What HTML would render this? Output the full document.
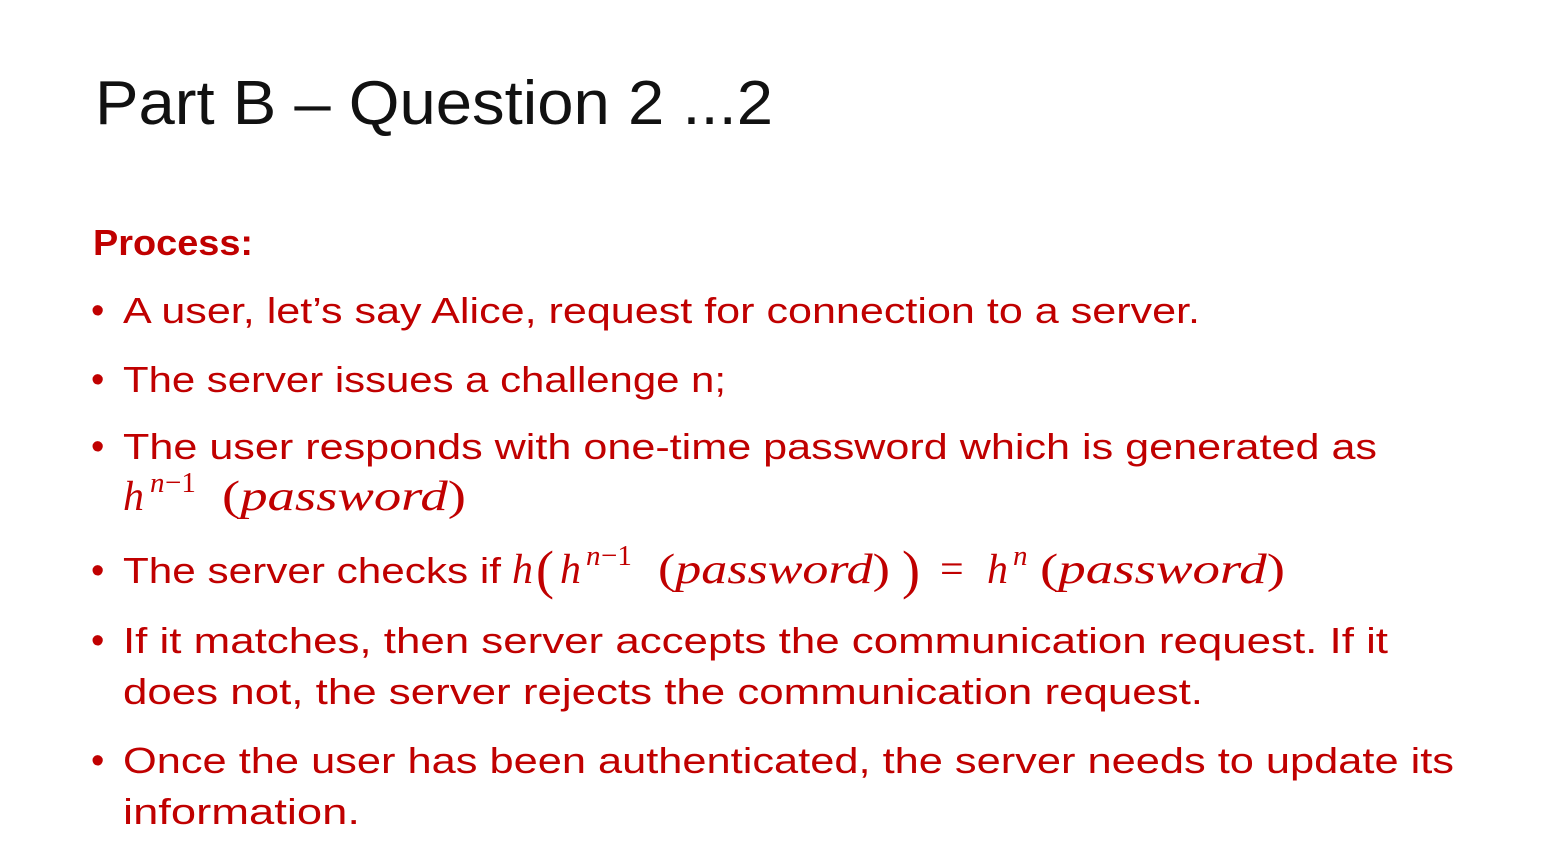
<!DOCTYPE html>
<html><head><meta charset="utf-8"><style>
html,body{margin:0;padding:0;background:#fff;}
svg{display:block;}
.t{font-family:"Liberation Sans",sans-serif;fill:#c00000;font-size:36px;}
.m{font-family:"Liberation Serif",serif;font-style:italic;fill:#c00000;}
.mr{font-family:"Liberation Serif",serif;fill:#c00000;}
.b{font-family:"Liberation Sans",sans-serif;fill:#c00000;font-size:38px;}
</style></head><body>
<svg width="1554" height="855" viewBox="0 0 1554 855" xmlns="http://www.w3.org/2000/svg">
<rect width="1554" height="855" fill="#fff"/>
<text x="95" y="124" font-family="Liberation Sans, sans-serif" font-size="62" fill="#111" textLength="678" lengthAdjust="spacingAndGlyphs">Part B – Question 2 ...2</text>
<text x="93" y="255" class="t" font-weight="bold" textLength="160" lengthAdjust="spacingAndGlyphs">Process:</text>

<text x="91" y="323" class="b">•</text>
<text x="123" y="323" class="t" textLength="1077" lengthAdjust="spacingAndGlyphs">A user, let’s say Alice, request for connection to a server.</text>

<text x="91" y="392" class="b">•</text>
<text x="123" y="392" class="t" textLength="603" lengthAdjust="spacingAndGlyphs">The server issues a challenge n;</text>

<text x="91" y="459" class="b">•</text>
<text x="123" y="459" class="t" textLength="1254" lengthAdjust="spacingAndGlyphs">The user responds with one-time password which is generated as</text>
<text x="123" y="510" class="m" style="font-size:42px">h</text>
<text x="150" y="492" class="m" style="font-size:29px">n</text><text x="165" y="492" class="mr" style="font-size:29px">−1</text>
<text x="222" y="510" class="mr" style="font-size:42px" textLength="244" lengthAdjust="spacingAndGlyphs">(<tspan font-style="italic">password</tspan>)</text>

<text x="91" y="583" class="b">•</text>
<text x="123" y="583" class="t" textLength="378" lengthAdjust="spacingAndGlyphs">The server checks if</text>
<text x="512" y="583" class="m" style="font-size:42px">h</text>
<text x="536" y="588" class="mr" style="font-size:54px">(</text>
<text x="560" y="583" class="m" style="font-size:42px">h</text>
<text x="586" y="565" class="m" style="font-size:29px">n</text><text x="601" y="565" class="mr" style="font-size:29px">−1</text>
<text x="658" y="583" class="mr" style="font-size:42px" textLength="232" lengthAdjust="spacingAndGlyphs">(<tspan font-style="italic">password</tspan>)</text>
<text x="902" y="588" class="mr" style="font-size:54px">)</text>
<text x="940" y="583" class="mr" style="font-size:42px">=</text>
<text x="987" y="583" class="m" style="font-size:42px">h</text>
<text x="1013" y="565" class="m" style="font-size:29px">n</text>
<text x="1040" y="583" class="mr" style="font-size:42px" textLength="245" lengthAdjust="spacingAndGlyphs">(<tspan font-style="italic">password</tspan>)</text>

<text x="91" y="653" class="b">•</text>
<text x="123" y="653" class="t" textLength="1265" lengthAdjust="spacingAndGlyphs">If it matches, then server accepts the communication request. If it</text>
<text x="123" y="704" class="t" textLength="1080" lengthAdjust="spacingAndGlyphs">does not, the server rejects the communication request.</text>

<text x="91" y="773" class="b">•</text>
<text x="123" y="773" class="t" textLength="1331" lengthAdjust="spacingAndGlyphs">Once the user has been authenticated, the server needs to update its</text>
<text x="123" y="824" class="t" textLength="237" lengthAdjust="spacingAndGlyphs">information.</text>
</svg>
</body></html>
